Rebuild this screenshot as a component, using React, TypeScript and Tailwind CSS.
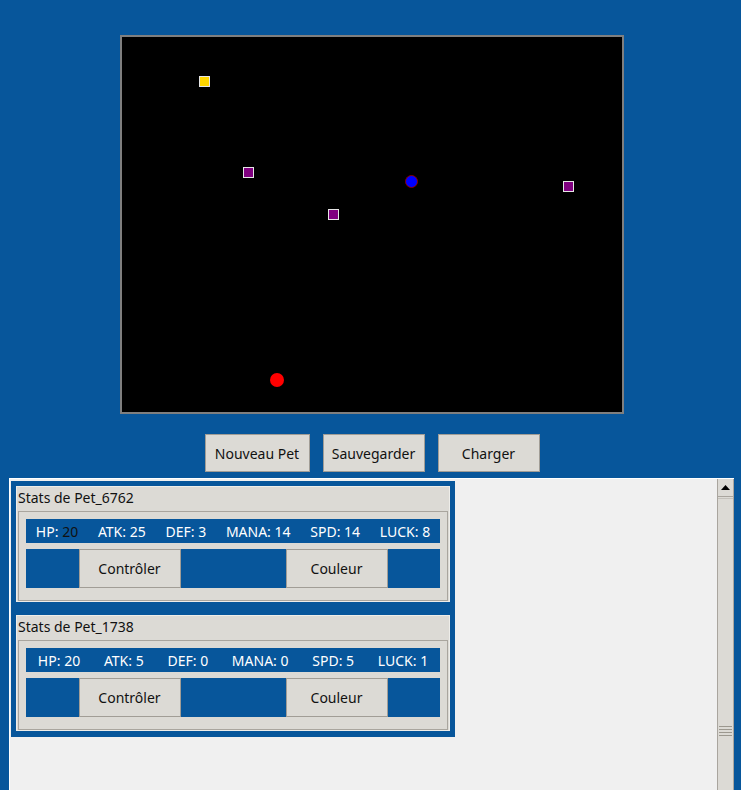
const pets = [
  {
    name: "Pet_6762",
    stats: [
      { label: "HP", value: "20" },
      { label: "ATK", value: "25" },
      { label: "DEF", value: "3" },
      { label: "MANA", value: "14" },
      { label: "SPD", value: "14" },
      { label: "LUCK", value: "8" },
    ],
    hpDark: true,
  },
  {
    name: "Pet_1738",
    stats: [
      { label: "HP", value: "20" },
      { label: "ATK", value: "5" },
      { label: "DEF", value: "0" },
      { label: "MANA", value: "0" },
      { label: "SPD", value: "5" },
      { label: "LUCK", value: "1" },
    ],
    hpDark: false,
  },
];

// squares drawn on the game canvas (inner coordinates)
const foods = [
  { id: "gold", left: "left-[77px]", top: "top-[39px]", fill: "bg-[#ffd700]" },
  { id: "p1", left: "left-[121px]", top: "top-[130px]", fill: "bg-[#800080]" },
  { id: "p2", left: "left-[206px]", top: "top-[172px]", fill: "bg-[#800080]" },
  { id: "p3", left: "left-[441px]", top: "top-[144px]", fill: "bg-[#800080]" },
];

function TkButton({ label, className = "" }: { label: string; className?: string }) {
  return (
    <button
      className={`flex items-center justify-center border border-[#a19d96] bg-[#dcdad5] text-[14px] text-[#111] ${className}`}
    >
      {label}
    </button>
  );
}

function PetFrame({ pet }: { pet: (typeof pets)[number] }) {
  return (
    <div className="flex flex-col border border-[#eeede9] bg-[#dcdad5]">
      <div className="h-[24px] pl-[1px] text-[14px] leading-[22px] text-[#111]">
        Stats de {pet.name}
      </div>
      <div className="mx-[1px] mb-[0px] flex flex-col gap-[6px] border border-[#a9a59e] px-[7px] pb-[12px] pt-[7px]">
        <div className="flex h-[24px] items-center bg-[#07569b] text-[14px] text-white">
          {pet.stats.map((s, i) => (
            <span key={s.label} className="flex-auto text-center">
              {s.label}:{" "}
              <span className={i === 0 && pet.hpDark ? "text-[#111]" : ""}>{s.value}</span>
            </span>
          ))}
        </div>
        <div className="flex h-[39px] justify-around bg-[#07569b]">
          <TkButton label="Contrôler" className="w-[102px]" />
          <TkButton label="Couleur" className="w-[102px]" />
        </div>
      </div>
    </div>
  );
}

function Scrollbar() {
  return (
    <div className="flex w-[17px] flex-col border-x border-[#a9a59e] bg-[#dcdad5]">
      <div className="flex h-[18px] items-center justify-center border-b border-[#a9a59e]">
        <svg width="9" height="5" viewBox="0 0 9 5">
          <polygon points="0,5 4.5,0 9,5" fill="#000" />
        </svg>
      </div>
      <div className="mt-[1px] flex flex-1 flex-col border-t border-[#c4c1bb]">
        <div className="mx-[1px] mt-[227px] flex flex-col gap-[2px]">
          <div className="h-px bg-[#9c988f]" />
          <div className="h-px bg-[#9c988f]" />
          <div className="h-px bg-[#9c988f]" />
          <div className="h-px bg-[#9c988f]" />
        </div>
      </div>
    </div>
  );
}

export default function App() {
  return (
    <div
      className="flex h-[790px] w-[741px] flex-col overflow-hidden bg-[#07569b]"
      style={{ fontFamily: '"Noto Sans", "DejaVu Sans", sans-serif' }}
    >
      <div className="flex justify-center pl-[3px] pt-[35px]">
        <div className="relative h-[379px] w-[504px] border-2 border-[#7f7f7f] bg-black">
          {foods.map((f) => (
            <span
              key={f.id}
              className={`absolute h-[11px] w-[11px] border border-[#e6e6e6] ${f.left} ${f.top} ${f.fill}`}
            />
          ))}
          <span className="absolute left-[283px] top-[138px] h-[13px] w-[13px] rounded-full border border-[#8b0000] bg-[#0000ff]" />
          <span className="absolute left-[148px] top-[336px] h-[14px] w-[14px] rounded-full bg-[#ff0000]" />
        </div>
      </div>

      <div className="mt-[20px] flex justify-center gap-[13px] pl-[3px]">
        <TkButton label="Nouveau Pet" className="h-[38px] w-[105px]" />
        <TkButton label="Sauvegarder" className="h-[38px] w-[102px]" />
        <TkButton label="Charger" className="h-[38px] w-[102px]" />
      </div>

      <div className="ml-[9px] mt-[6px] flex w-[725px] flex-1 border-l border-t border-white bg-[#f0f0f0]">
        <div className="flex-1 pl-[1px] pt-[2px]">
          <div className="flex w-[444px] flex-col gap-[13px] bg-[#07569b] px-[5px] pb-[6px] pt-[5px]">
            {pets.map((p) => (
              <PetFrame key={p.name} pet={p} />
            ))}
          </div>
        </div>
        <Scrollbar />
      </div>
    </div>
  );
}
